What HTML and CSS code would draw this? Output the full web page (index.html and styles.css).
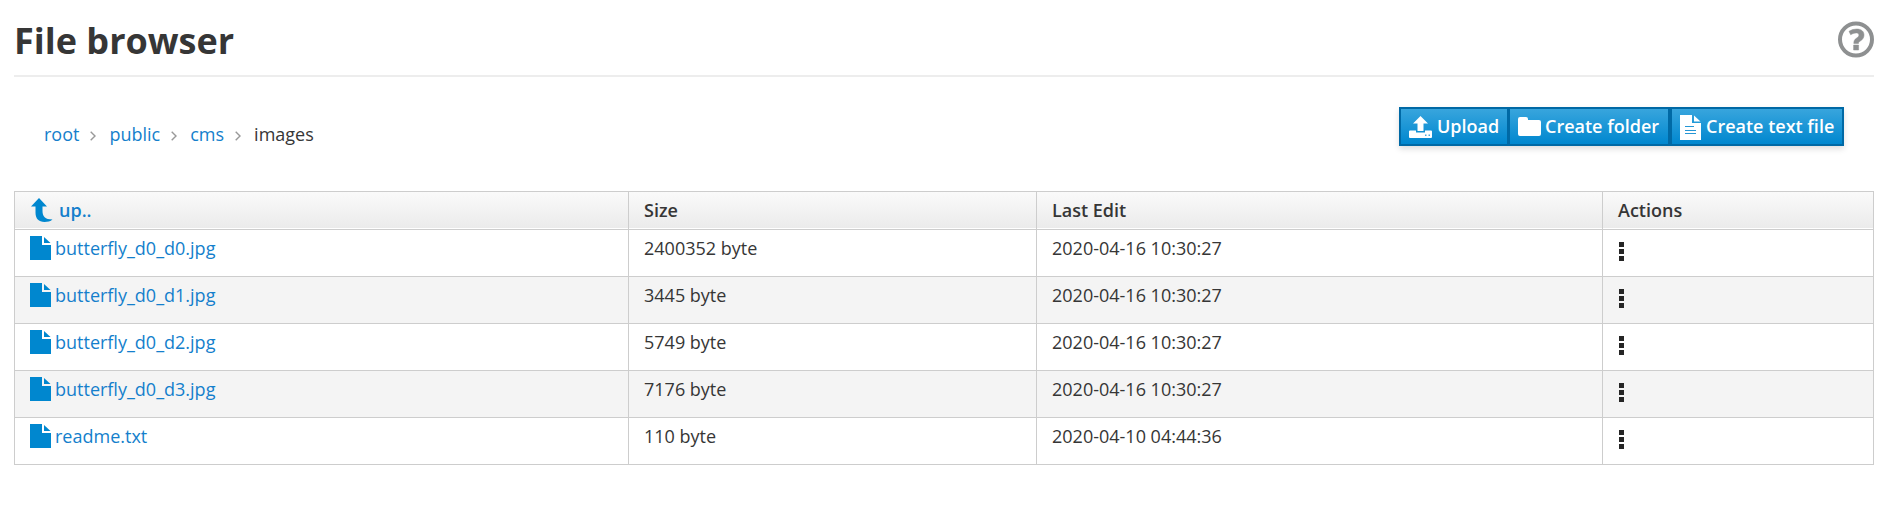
FILE: index.html
```html
<!DOCTYPE html>
<html lang="en">
<head>
<meta charset="utf-8">
<title>File browser</title>
<link rel="stylesheet" href="styles.css">
</head>
<body>
<svg class="defs" width="0" height="0">
  <symbol id="file" viewBox="0 0 21 24"><path d="M0 0H12V9H21V24H0z"/><path d="M14 1L20.500 7H14z"/></symbol>
</svg>
<header class="page-header">
  <h1>File browser</h1>
  <svg class="help" viewBox="0 0 36 37" width="36" height="37"><circle cx="18" cy="18.500" r="16" fill="none" stroke="#8e9091" stroke-width="4"/><path d="M11 10.300Q14.500 8 18.500 8C23.500 8 26 10.500 26 14C26 17 24.500 18.600 22.300 20C20.800 21 20.500 21.500 20.500 22.500H15.800C15.800 19.800 16.500 18.500 18.700 17C20.300 15.900 20.900 15.300 20.900 14C20.900 12.500 19.800 11.900 18.200 11.900C16.300 11.900 14.500 12.600 12.700 13.800zM15.600 24H20.600V29H15.600z" fill="#8e9091" stroke="#8e9091" stroke-width=".5"/></svg>
</header>
<section class="toolbar">
  <nav class="crumbs">
    <a href="#">root</a><svg class="sep" width="6" height="10" viewBox="0 0 6 10"><path d="M.7 .7L5 5L.7 9.300"/></svg>
    <a href="#">public</a><svg class="sep" width="6" height="10" viewBox="0 0 6 10"><path d="M.7 .7L5 5L.7 9.300"/></svg>
    <a href="#">cms</a><svg class="sep" width="6" height="10" viewBox="0 0 6 10"><path d="M.7 .7L5 5L.7 9.300"/></svg>
    <span>images</span>
  </nav>
  <div class="buttons">
    <button class="btn upload"><svg width="23" height="24" viewBox="0 0 23 24"><path d="M11.500 1L19 8.500H14.500V16H8.500V8.500H4z"/><path d="M1 15.500H7V17.500H16V15.500H22Q23 15.500 23 16.500V22Q23 23 22 23H1Q0 23 0 22V16.500Q0 15.500 1 15.500z"/><path d="M16 19.500h1.500v1.500h-1.500zM19.500 19.500h1.500v1.500h-1.500z" fill="#4aa9dc"/></svg><span>Upload</span></button>
    <button class="btn folder"><svg width="23" height="24" viewBox="0 0 23 24"><path d="M2 2H8Q10 2 10 4V5H21Q23 5 23 7V19Q23 21 21 21H2Q0 21 0 19V4Q0 2 2 2z"/></svg><span>Create folder</span></button>
    <button class="btn text"><svg width="21" height="25" viewBox="0 0 21 25"><path d="M0 0H12V8H21V25H0z"/><path d="M14 .5L20.500 6.500H14z"/><path d="M5 11.500H14M5 15.500H16M5 18.500H16" stroke="#2496d5" stroke-width="1.200"/></svg><span>Create text file</span></button>
  </div>
</section>
<table class="files">
  <colgroup><col class="c-name"><col class="c-size"><col class="c-date"><col class="c-act"></colgroup>
  <thead>
    <tr><th><a class="up" href="#"><svg width="22" height="24" viewBox="0 0 22 24"><path d="M8 0L16 8.500H11.500V13C11.500 18 14 21.500 21.500 21.500C19.500 23.300 16.500 24 13.500 24C7.500 24 4.500 20.500 4.500 14.500V8.500H0z"/></svg>up..</a></th><th>Size</th><th>Last Edit</th><th>Actions</th></tr>
  </thead>
  <tbody>
    <tr><td><a href="#"><svg width="21" height="24"><use href="#file"/></svg>butterfly_d0_d0.jpg</a></td><td>2400352 byte</td><td>2020-04-16 10:30:27</td><td><i class="dots"></i></td></tr>
    <tr><td><a href="#"><svg width="21" height="24"><use href="#file"/></svg>butterfly_d0_d1.jpg</a></td><td>3445 byte</td><td>2020-04-16 10:30:27</td><td><i class="dots"></i></td></tr>
    <tr><td><a href="#"><svg width="21" height="24"><use href="#file"/></svg>butterfly_d0_d2.jpg</a></td><td>5749 byte</td><td>2020-04-16 10:30:27</td><td><i class="dots"></i></td></tr>
    <tr><td><a href="#"><svg width="21" height="24"><use href="#file"/></svg>butterfly_d0_d3.jpg</a></td><td>7176 byte</td><td>2020-04-16 10:30:27</td><td><i class="dots"></i></td></tr>
    <tr><td><a href="#"><svg width="21" height="24"><use href="#file"/></svg>readme.txt</a></td><td>110 byte</td><td>2020-04-10 04:44:36</td><td><i class="dots"></i></td></tr>
  </tbody>
</table>
</body>
</html>
```
FILE: styles.css
```css
* { box-sizing: border-box; }
body {
  margin: 0;
  padding: 0 26px 0 14px;
  background: #fff;
  color: #363636;
  font: 18px/24px "Open Sans", sans-serif;
}
a { color: #147fcc; text-decoration: none; }
.defs { display: block; height: 0; }
.page-header {
  display: flex;
  justify-content: space-between;
  align-items: flex-start;
  height: 77px;
  border-bottom: 2px solid #ededed;
}
h1 { margin: 17px 0 0; font-size: 36px; line-height: 48px; font-weight: 700; }
.help { margin-top: 21px; }
.toolbar {
  display: flex;
  justify-content: space-between;
  height: 114px;
  padding: 30px 30px 0 30px;
}
.crumbs { display: flex; height: 24px; margin-top: 15px; }
.sep { flex: none; margin: 9px 13px 0 11px; fill: none; stroke: #999; stroke-width: 1.4; }
.buttons { display: flex; height: 39px; box-shadow: 0 3px 6px rgba(0, 0, 0, .13); }
.btn {
  display: flex;
  margin: 0;
  padding: 5px 0 0 8px;
  border: 2px solid #0069a5;
  background: linear-gradient(#38a5dd, #0087cf);
  color: #fff;
  font: 600 18px/24px "Open Sans", sans-serif;
  white-space: nowrap;
}
.btn svg { flex: none; fill: #fff; margin: 1px 5px 0 0; }
.upload { width: 110px; }
.folder { width: 162px; margin-left: -1px; }
.text { width: 174px; }
.folder span { margin-left: -1px; }
.files {
  width: 1860px;
  border-collapse: separate;
  border-spacing: 0;
  table-layout: fixed;
  border: solid #cdcdcd;
  border-width: 1px 0 0 1px;
}
.c-name { width: 614px; }
.c-size { width: 408px; }
.c-date { width: 566px; }
th, td {
  border: solid #cdcdcd;
  border-width: 0 1px 1px 0;
  padding: 6px 15px 0;
  text-align: left;
  vertical-align: top;
}
th {
  height: 38px;
  font-weight: 600;
  background: linear-gradient(#fafafa, #ebebeb 36px, #fff 36px);
}
td { height: 47px; }
tbody tr:nth-child(even) { background: #f4f4f4; }
td a, .up { display: flex; gap: 4px; }
td svg, .up svg { flex: none; fill: #0087cf; }
.up { gap: 6px; }
.up svg { margin-left: 1px; }
.dots {
  display: block;
  width: 5px;
  height: 19px;
  margin: 6px 0 0 1px;
  background: repeating-linear-gradient(#252525 0 5px, transparent 5px 7px);
}
```
